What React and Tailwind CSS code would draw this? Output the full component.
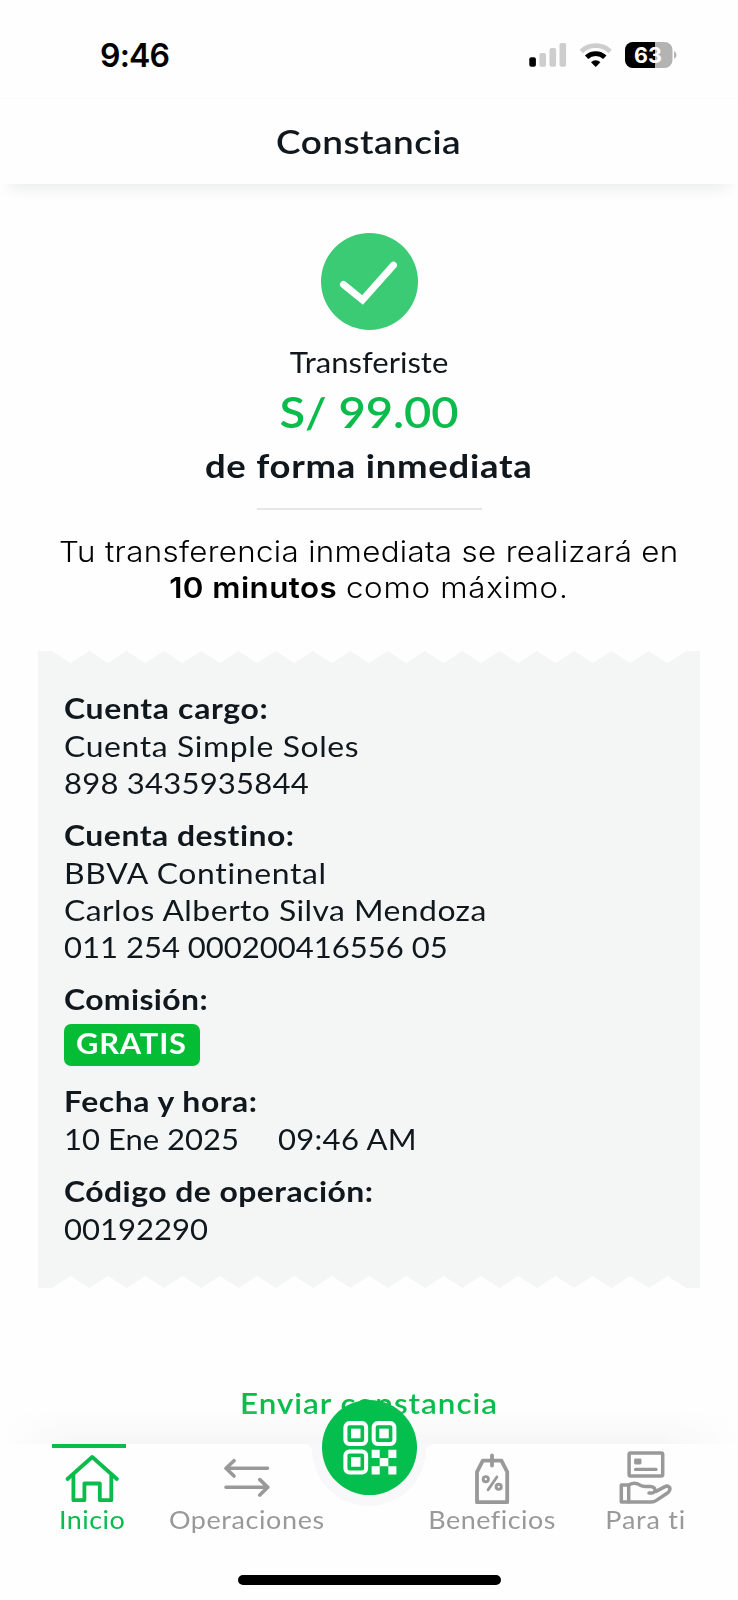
import React from "react";

const GREEN = "#0bbb4c";
const GREY = "#999999";

function StatusBar() {
  return (
    <div className="flex h-[98px] items-start justify-between pl-[100px] pr-[58px] pt-[36px] text-black">
      <div className="font-['Inter'] text-[32px] font-semibold leading-[39px] tracking-[-0.8px]">9:46</div>
      <svg className="mt-px h-[34px] w-[155px]" viewBox="525 37 155 34">
        <rect x="529.3" y="57.3" width="6.6" height="9.5" rx="2" fill="#000" />
        <rect x="539.4" y="53" width="6.6" height="13.8" rx="2" fill="#cdcdcd" />
        <rect x="549.5" y="48" width="6.6" height="18.8" rx="2" fill="#cdcdcd" />
        <rect x="559.5" y="43" width="6.6" height="23.8" rx="2" fill="#cdcdcd" />
        <path d="M581.3 51.4 A21 21 0 0 1 610.1 51.4" fill="none" stroke="#cdcdcd" strokeWidth="4.8" />
        <path d="M586.6 57.3 A12.9 12.9 0 0 1 604.8 57.3" fill="none" stroke="#000" strokeWidth="4.8" />
        <path d="M591 62.2 A6.8 6.8 0 0 1 600.4 62.2 L595.7 67 Z" fill="#000" />
        <clipPath id="battery"><rect x="625" y="42" width="47.5" height="26" rx="8" /></clipPath>
        <g clipPath="url(#battery)">
          <rect x="625" y="42" width="48" height="26" fill="#b3b3b3" />
          <rect x="625" y="42" width="30" height="26" fill="#000" />
        </g>
        <path d="M674 51 Q676.5 52.3 676.5 55 Q676.5 57.7 674 59 Z" fill="#b3b3b3" />
        <text x="648" y="63.2" textAnchor="middle" fontFamily="Inter" fontWeight="700" fontSize="21.5" fill="#fff">63</text>
      </svg>
    </div>
  );
}

function ZigZag({ flip }) {
  const teeth = Array.from({ length: 17 }, (_, i) => {
    const x = 14 + i * 37.3;
    return `L${x.toFixed(1)} 0 L${(x + 18.65).toFixed(1)} 12 L${(x + 37.3).toFixed(1)} 0`;
  }).join(" ");
  return (
    <svg className={flip ? "block h-3 w-full -scale-y-100" : "block h-3 w-full"} viewBox="0 0 662 12" preserveAspectRatio="none">
      <path d={`M0 12 L0 0 ${teeth} L662 0 L662 12 Z`} fill="#f4f6f6" />
    </svg>
  );
}

function Label({ children, className }) {
  return <div className={"h-[37px] origin-left scale-x-110 whitespace-nowrap font-bold " + className}>{children}</div>;
}

function Line({ children, className }) {
  return <div className={"h-[37px] origin-left whitespace-nowrap pt-px " + className}>{children}</div>;
}

function Receipt() {
  return (
    <section className="mx-[38px] mt-[45.5px] flex h-[637px] flex-col text-[#10181d]">
      <ZigZag />
      <div className="flex grow flex-col gap-4 bg-[#f4f6f6] pl-[26px] pt-[26px] text-[29px] leading-[37px]">
        <div>
          <Label className="tracking-[0.6px]">Cuenta cargo:</Label>
          <Line className="scale-x-110 tracking-[0.55px]">Cuenta Simple Soles</Line>
          <Line className="scale-x-107 tracking-[0.2px]">898 3435935844</Line>
        </div>
        <div>
          <Label className="tracking-[0.45px]">Cuenta destino:</Label>
          <Line className="scale-x-110 tracking-[0.6px]">BBVA Continental</Line>
          <Line className="scale-x-110 tracking-[0.4px]">Carlos Alberto Silva Mendoza</Line>
          <Line className="scale-x-107">011 254 000200416556 05</Line>
        </div>
        <div>
          <Label className="tracking-[0.35px]">Comisión:</Label>
          <div className="mt-[7px] h-[42px] w-[136px] rounded-[7px] bg-[#04bd34] pl-[12px] text-[28px] font-bold leading-[38px] text-white">
            <div className="origin-left scale-x-110 tracking-[0.75px]">GRATIS</div>
          </div>
        </div>
        <div>
          <Label className="tracking-[0.5px]">Fecha y hora:</Label>
          <div className="flex">
            <Line className="w-[214px] scale-x-107">10 Ene 2025</Line>
            <Line className="scale-x-107 tracking-[0.27px]">09:46 AM</Line>
          </div>
        </div>
        <div>
          <Label className="tracking-[0.42px]">Código de operación:</Label>
          <Line className="scale-x-107">00192290</Line>
        </div>
      </div>
      <ZigZag flip />
    </section>
  );
}

function HomeIcon() {
  return (
    <svg className="h-[60px] w-[60px]" viewBox="61.5 1448 60 60" fill="none" stroke={GREEN} strokeWidth="3.8" strokeLinecap="round" strokeLinejoin="round">
      <path d="M67 1479 L91.7 1457 L116.4 1479" />
      <path d="M72.9 1475 V1500.2 H83.9 V1483.5 H99.3 V1500.2 H110.8 V1475" />
    </svg>
  );
}

function TransferIcon() {
  return (
    <svg className="h-[60px] w-[60px]" viewBox="217 1448 60 60" fill="none" stroke={GREY} strokeWidth="3.6" strokeLinecap="round" strokeLinejoin="round">
      <path d="M267.5 1468.3 H226.3 M234 1460.7 L226 1468.3 L234 1476" />
      <path d="M226 1487.2 H267.5 M259.8 1479.6 L267.8 1487.2 L259.8 1495" />
    </svg>
  );
}

function TagIcon() {
  return (
    <svg className="h-[60px] w-[60px]" viewBox="462 1448 60 60" fill="none" stroke={GREY} strokeWidth="3.8" strokeLinecap="round" strokeLinejoin="round">
      <path d="M477 1502.2 V1471.8 L482.8 1460.6 H501.4 L507.2 1471.8 V1502.2 Z" />
      <path d="M492 1455.5 V1465.5" />
      <g strokeWidth="2.9">
        <circle cx="485.8" cy="1479.2" r="2.6" />
        <circle cx="498.7" cy="1486.8" r="2.6" />
        <path d="M496.9 1477 L488.1 1489.8" />
      </g>
    </svg>
  );
}

function HandCardIcon() {
  return (
    <svg className="h-[60px] w-[60px]" viewBox="615.5 1448 60 60" fill="none" stroke={GREY} strokeWidth="3.5" strokeLinecap="round" strokeLinejoin="round">
      <rect x="628.6" y="1453" width="33.6" height="23" rx="1.5" />
      <rect x="633.6" y="1458.5" width="7.4" height="6" rx="1.4" fill={GREY} stroke="none" />
      <path d="M635 1469.4 H655.5" strokeWidth="3.2" />
      <path d="M620.8 1485 H628.2 V1502 H620.8 Z" />
      <path d="M628.6 1484.8 C633 1482.4 637 1483 640 1485.4 C641.5 1486.4 643 1486.4 645 1486.4 H650 C653.6 1486.6 655.2 1489 654.3 1491 C653.7 1492.6 652.5 1493 651 1493 H648.5" />
      <path d="M655.5 1491.4 L664.5 1486.6 C667.6 1485.2 670.2 1487.4 669.2 1490 C668.7 1491.4 668 1492.2 667 1493 L655.5 1500.6 C654 1501.6 652.5 1502 651 1502 H628.6" />
    </svg>
  );
}

function NavItem({ icon, label, className, labelClassName, active }) {
  return (
    <div className={"flex flex-col items-center " + className}>
      <div className={active ? "mr-[6px] h-1 w-[74px] bg-[#0bbb4c]" : "h-1 w-[74px]"} />
      {icon}
      <div className={"-mt-[4.5px] h-[31px] scale-x-110 whitespace-nowrap text-[24.5px] leading-[31px] " + labelClassName}>{label}</div>
    </div>
  );
}

function QrButton() {
  const finder = (x, y) => (
    <g key={`${x}-${y}`}>
      <rect x={x + 2} y={y + 2} width="20.6" height="20.8" rx="4" fill="none" stroke="#fff" strokeWidth="4" />
      <rect x={x + 7.6} y={y + 7.5} width="9.4" height="9.6" fill="#fff" />
    </g>
  );
  return (
    <div className="absolute left-[322px] top-[-44px] h-[94.5px] w-[94.5px] rounded-full bg-[#04be4e]">
      <svg className="h-full w-full" viewBox="322 1400 94 94">
        {finder(343.3, 1421)}
        {finder(371.4, 1421)}
        {finder(343.3, 1449.3)}
        <path fill="#fff" d="M371.4 1449.6h8v8h-8z M388 1449.6h8v8h-8z M379.4 1457.6h8.6v8.4h-8.6z M371.4 1466h8v8h-8z M388 1466h8v8h-8z" />
      </svg>
    </div>
  );
}

function BottomNav() {
  return (
    <nav className="absolute bottom-0 left-0 h-[156px] w-full">
      <div className="absolute left-0 top-[-34px] h-[34px] w-full bg-linear-to-t from-[#f6f6f6] to-transparent mask-x-from-90% mask-x-to-100%" />
      <svg className="absolute left-0 top-0 h-[156px] w-[738px]" viewBox="0 1444 738 156">
        <path d="M300 1444 H438 V1510 H300 Z" fill="#f8f8fa" />
        <path d="M0 1444 H303 Q311.5 1444 312 1451 A57.2 57.2 0 0 0 369 1506 A57.2 57.2 0 0 0 426 1451 Q426.5 1444 435 1444 H738 V1600 H0 Z" fill="#fefefe" />
      </svg>
      <div className="relative flex pl-[34px]">
        <NavItem className="w-[116px] text-[#0bbb4c]" labelClassName="tracking-[0.4px]" icon={<HomeIcon />} label="Inicio" active />
        <NavItem className="w-[194px] text-[#999999]" labelClassName="tracking-[0.55px]" icon={<TransferIcon />} label="Operaciones" />
        <NavItem className="ml-[51px] w-[194px] text-[#999999]" labelClassName="tracking-[0.46px]" icon={<TagIcon />} label="Beneficios" />
        <NavItem className="w-[113px] text-[#999999]" labelClassName="tracking-[0.72px]" icon={<HandCardIcon />} label="Para ti" />
      </div>
      <QrButton />
      <div className="relative mx-auto mt-[40.5px] h-[9.5px] w-[263px] rounded-full bg-black" />
    </nav>
  );
}

export default function App() {
  return (
    <div className="relative flex h-[1600px] w-[738px] flex-col overflow-hidden bg-[#fefefe] font-['Lato',sans-serif] text-[#10181d]">
      <StatusBar />
      <header className="flex h-[86px] shrink-0 items-center justify-center border-t border-[#fbfbfb] bg-[#fefefe] shadow-[0_14px_14px_-10px_#e9ebeb] text-[33px] font-semibold">
        <h1 className="scale-x-112 tracking-[0.4px]">Constancia</h1>
      </header>
      <main className="flex flex-col">
        <div className="flex flex-col items-center text-center">
          <svg className="mt-[48.5px] h-[97px] w-[97px]" viewBox="0 0 97 97">
            <circle cx="48.5" cy="48.5" r="48.5" fill="#3acb74" />
            <path d="M22.5 51.5 L41.5 67 L72.5 32.2" fill="none" stroke="#fff" strokeWidth="7" strokeLinecap="round" />
          </svg>
          <div className="mt-[14.5px] h-9 scale-x-107 text-[29px] leading-9">Transferiste</div>
          <div className="mt-[7px] h-[50px] scale-x-112 text-[42px] font-semibold leading-[50px] text-[#0bbb4c]">S/ 99.00</div>
          <div className="mt-[9px] h-10 scale-x-114 text-[32px] font-bold leading-10 tracking-[0.65px]">de forma inmediata</div>
          <div className="mt-[22px] h-[1.5px] w-[225px] bg-[#e6e8e8]" />
          <p className="mt-[24px] scale-x-108 whitespace-nowrap font-['Inter'] text-[29px] font-light leading-9 text-black">
            <span className="tracking-[0.3px]">Tu transferencia inmediata se realizará en</span>
            <br />
            <span className="font-semibold tracking-[0.4px]">10 minutos</span>{" "}
            <span className="tracking-[0.66px]">como máximo.</span>
          </p>
        </div>
        <Receipt />
        <div className="mt-[97px] h-9 scale-x-112 text-center text-[28px] font-semibold leading-9 tracking-[0.9px] text-[#0bbb4c]">Enviar constancia</div>
      </main>
      <BottomNav />
    </div>
  );
}
